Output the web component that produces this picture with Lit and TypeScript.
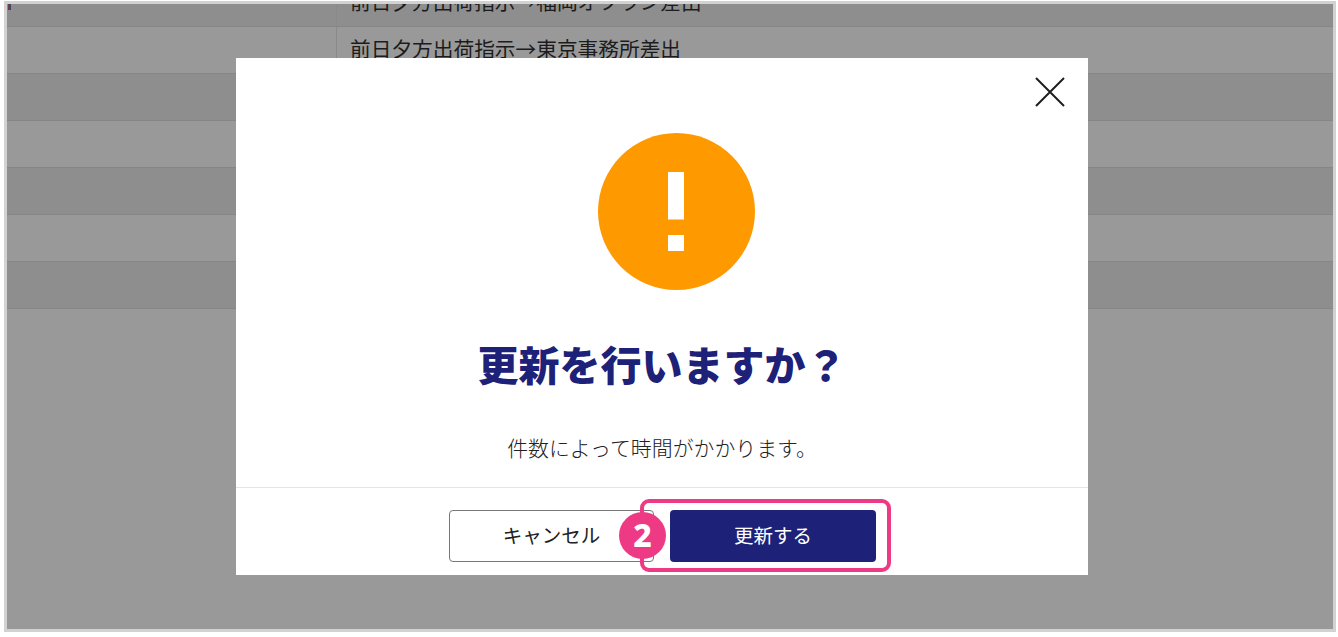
import { LitElement, html, css } from "lit";
import { customElement } from "lit/decorators.js";

const rows = [
  { dark: true, text: "前日夕方出荷指示→福岡オフラン差出" },
  { dark: false, text: "前日夕方出荷指示→東京事務所差出" },
  { dark: true, text: "" },
  { dark: false, text: "" },
  { dark: true, text: "" },
  { dark: false, text: "" },
  { dark: true, text: "" },
];

@customElement("app-root")
export class AppRoot extends LitElement {
  static styles = css`
    :host {
      display: block;
      width: 1338px;
      height: 637px;
      background: #fff;
      box-sizing: border-box;
      padding: 1px 2px 5px 4px;
      font-family: "Noto Sans CJK JP", "Noto Sans", sans-serif;
      color: #222;
    }
    .frame {
      position: relative;
      height: 100%;
      box-sizing: border-box;
      border: 3px solid #d2d2d2;
      background: #999;
      overflow: hidden;
    }
    .mark {
      position: absolute;
      left: 1px;
      top: 0;
      width: 3px;
      height: 6px;
      background: linear-gradient(90deg, #7a3f30, #2f4a78);
    }
    .table {
      margin-top: -24px;
    }
    .row {
      display: grid;
      grid-template-columns: 330px 1fr;
      height: 47px;
      box-sizing: border-box;
      border-bottom: 1px solid #868686;
      background: #999;
    }
    .row.dark {
      background: #8e8e8e;
    }
    .label {
      border-right: 1px solid #8a8a8a;
    }
    .value {
      padding-left: 13px;
      font-size: 20.7px;
      line-height: 42px;
      color: #1c1c1c;
      white-space: nowrap;
    }
    .modal {
      position: absolute;
      left: 229px;
      top: 54px;
      width: 852px;
      height: 517px;
      background: #fff;
      display: flex;
      flex-direction: column;
      align-items: center;
    }
    .close {
      position: absolute;
      right: 23px;
      top: 19px;
      width: 30px;
      height: 30px;
      display: block;
    }
    .alert {
      display: block;
      width: 157px;
      height: 157px;
      margin-top: 75px;
      margin-left: 29px;
    }
    h1 {
      margin: 43px 0 0;
      font-size: 41px;
      line-height: 60px;
      font-weight: 800;
      color: #1d2178;
      white-space: nowrap;
    }
    p {
      margin: 39px 0 0;
      font-size: 20.9px;
      line-height: 30px;
      font-weight: 300;
      color: #222;
    }
    .footer {
      margin-top: 25px;
      align-self: stretch;
      flex: 1;
      border-top: 1px solid #e4e4e4;
      display: flex;
      gap: 16px;
      padding: 22px 0 0 213px;
    }
    button {
      height: 52px;
      border-radius: 4px;
      box-sizing: border-box;
      font: inherit;
      font-size: 19.5px;
      padding: 0 0 4px;
    }
    .cancel {
      width: 205px;
      border: 1px solid #777;
      background: #fff;
      color: #222;
    }
    .update {
      width: 206px;
      border: none;
      background: #1d2178;
      color: #fff;
    }
    .outline {
      position: absolute;
      left: 633px;
      top: 495px;
      width: 251px;
      height: 73px;
      box-sizing: border-box;
      border: 4px solid #ee3a84;
      border-radius: 9px;
    }
    .badge {
      position: absolute;
      left: 612px;
      top: 508px;
      width: 47px;
      height: 47px;
      border-radius: 50%;
      background: #ee3a84;
      color: #fff;
      font-family: "Noto Sans", sans-serif;
      font-weight: 800;
      font-size: 32px;
      line-height: 45px;
      text-align: center;
    }
  `;

  render() {
    return html`
      <div class="frame">
        <div class="table">
          ${rows.map(
            (r) => html`
              <div class="row ${r.dark ? "dark" : ""}">
                <div class="label"></div>
                <div class="value">${r.text}</div>
              </div>
            `
          )}
        </div>
        <div class="mark"></div>
        <div class="modal">
          <svg class="close" viewBox="0 0 30 30" fill="none" stroke="#1f1f1f" stroke-width="2">
            <path d="M1 1L29 29M29 1L1 29"></path>
          </svg>
          <svg class="alert" viewBox="0 0 157 157">
            <circle cx="78.5" cy="78.5" r="78.5" fill="#ff9900"></circle>
            <rect x="70" y="39" width="16" height="47.5" fill="#fff"></rect>
            <rect x="70" y="102" width="16" height="16" fill="#fff"></rect>
          </svg>
          <h1>更新を行いますか？</h1>
          <p>件数によって時間がかかります。</p>
          <div class="footer">
            <button class="cancel">キャンセル</button>
            <button class="update">更新する</button>
          </div>
        </div>
        <div class="outline"></div>
        <div class="badge">2</div>
      </div>
    `;
  }
}
